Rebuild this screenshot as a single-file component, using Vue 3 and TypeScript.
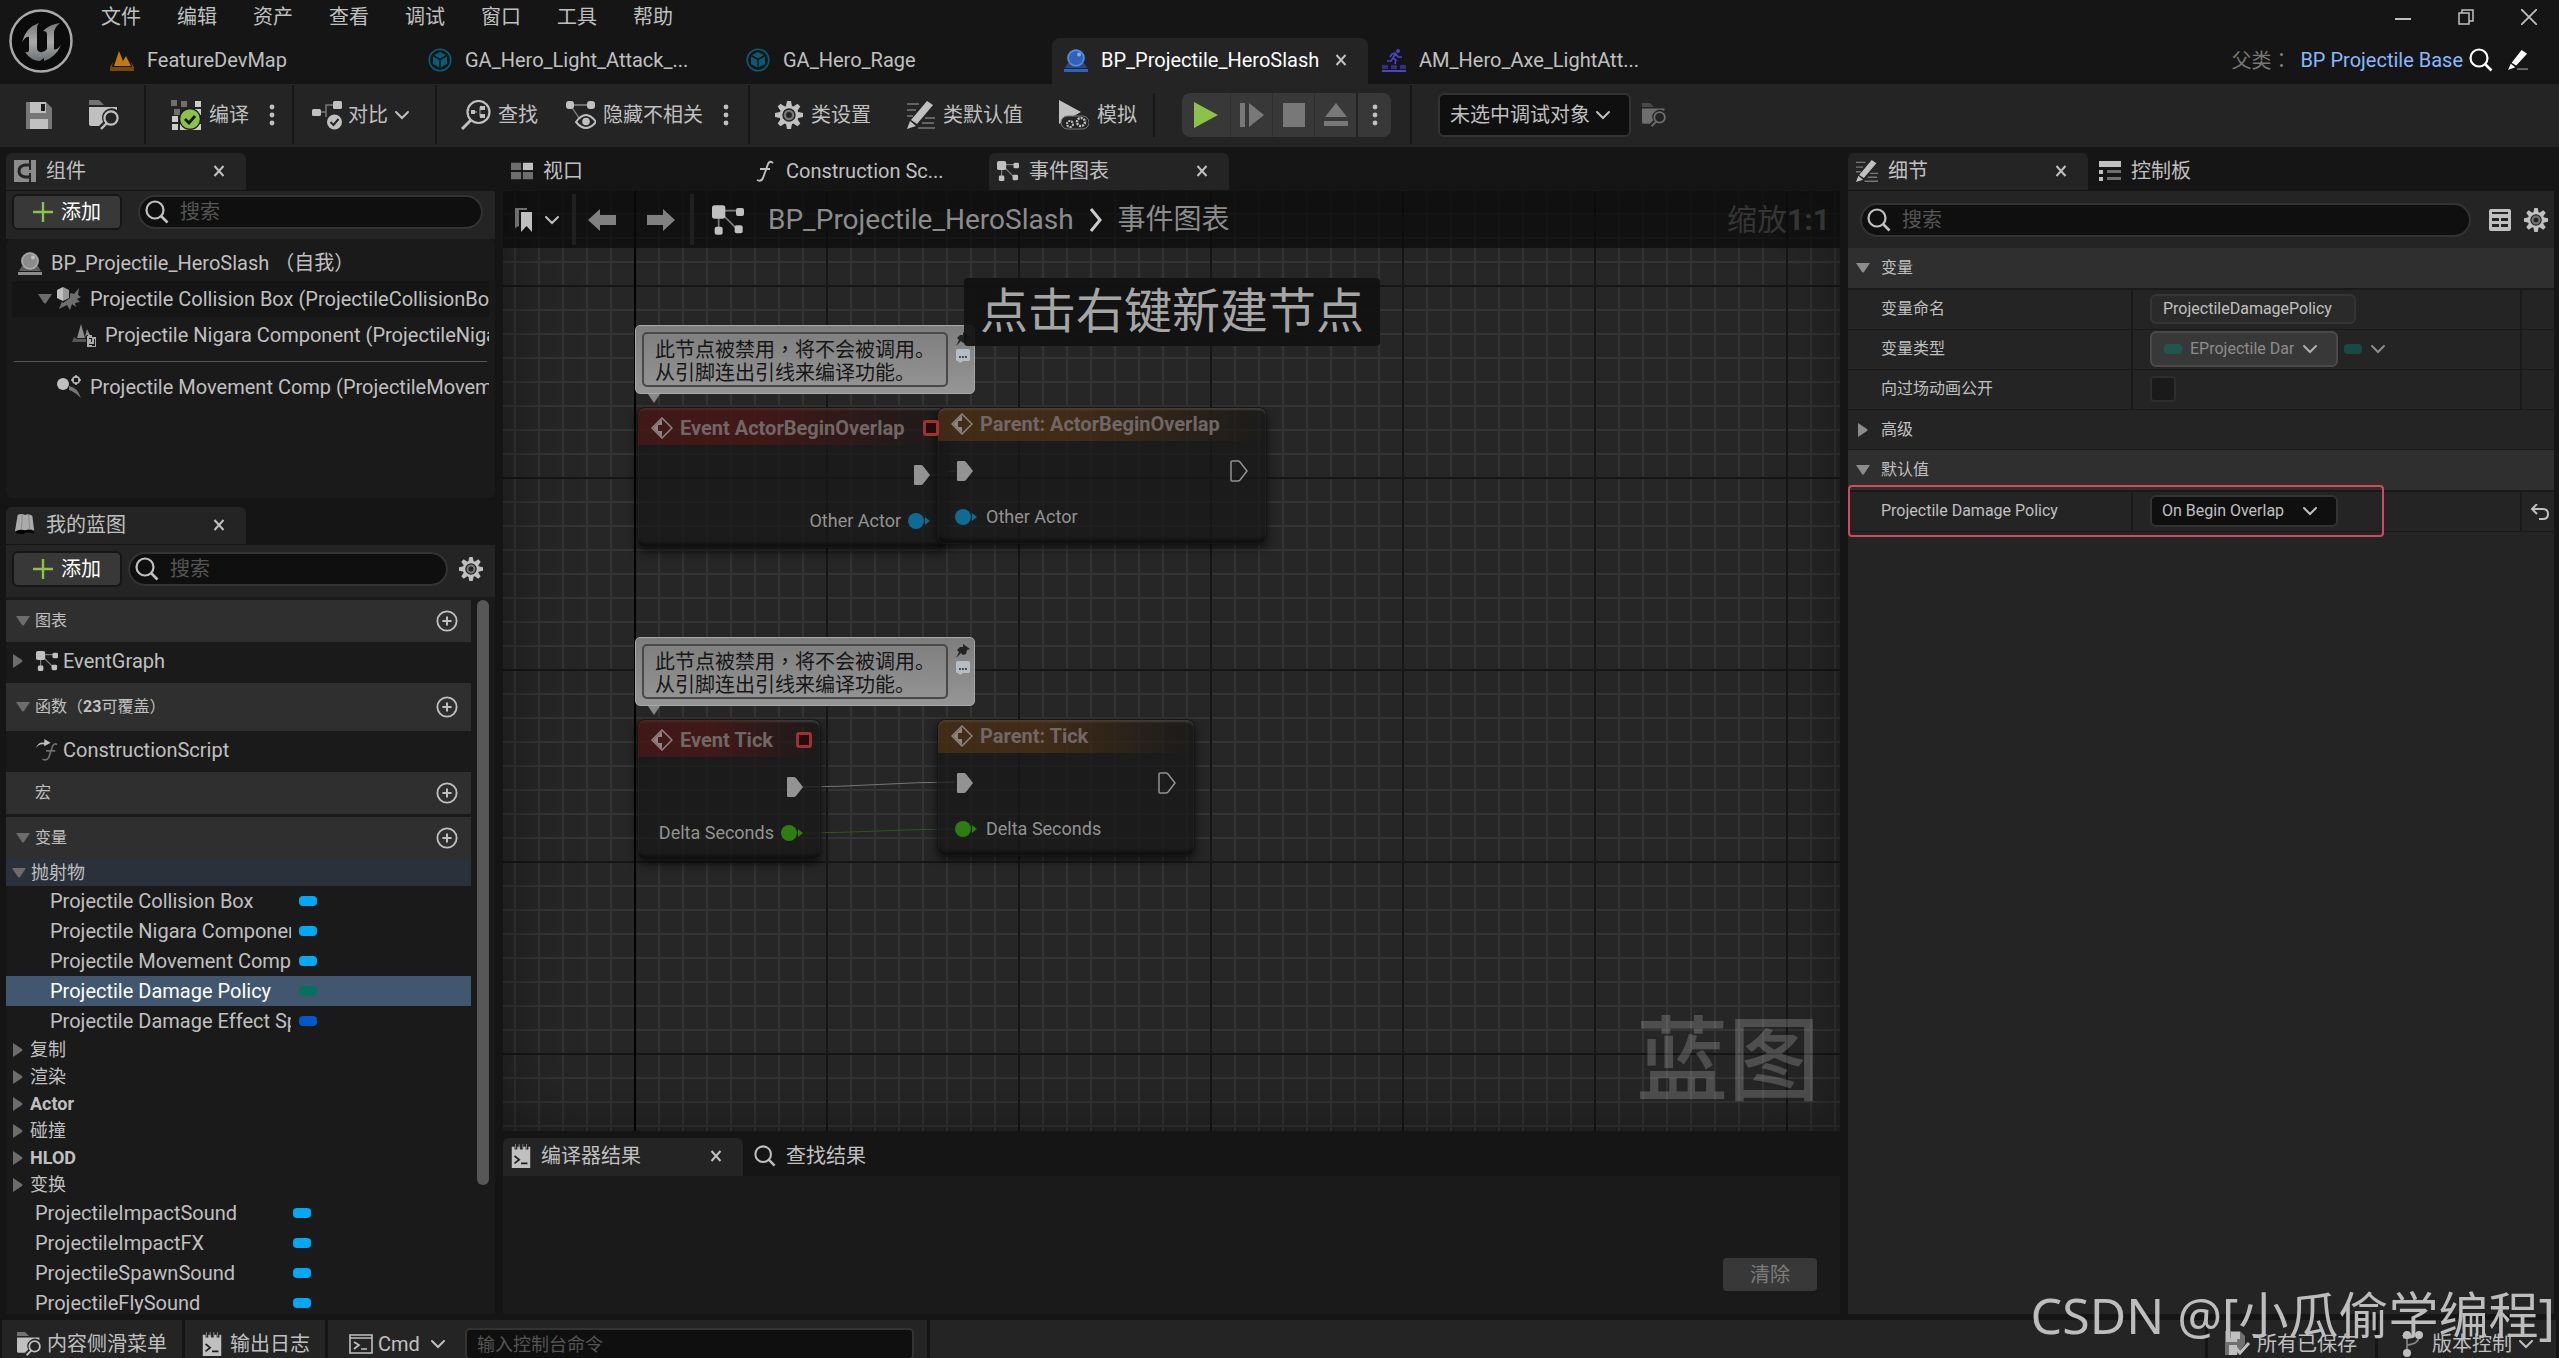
<script setup lang="ts">
import { ref } from 'vue'

interface GraphNode {
  id: string
  title: string
  kind: 'event' | 'parent'
  x: number
  y: number
  width: number
  pin: string
  color: string
}

const menus = ['文件', '编辑', '资产', '查看', '调试', '窗口', '工具', '帮助']

const documentTabs = [
  { icon: 'level', color: '#c27a0e', label: 'FeatureDevMap', active: false },
  { icon: 'ability', color: '#0b5a75', label: 'GA_Hero_Light_Attack_...', active: false },
  { icon: 'ability', color: '#0b5a75', label: 'GA_Hero_Rage', active: false },
  { icon: 'orb', color: '#2f62c0', label: 'BP_Projectile_HeroSlash', active: true },
  { icon: 'montage', color: '#4a45c8', label: 'AM_Hero_Axe_LightAtt...', active: false },
]

const variables = [
  { name: 'Projectile Collision Box', color: '#00a8f6', selected: false },
  { name: 'Projectile Nigara Component', color: '#00a8f6', selected: false },
  { name: 'Projectile Movement Comp', color: '#00a8f6', selected: false },
  { name: 'Projectile Damage Policy', color: '#04705f', selected: true },
  { name: 'Projectile Damage Effect Spec', color: '#0058cc', selected: false },
]

const categories = [
  { name: '复制', latin: false },
  { name: '渲染', latin: false },
  { name: 'Actor', latin: true },
  { name: '碰撞', latin: false },
  { name: 'HLOD', latin: true },
  { name: '变换', latin: false },
]
const looseVariables = ['ProjectileImpactSound', 'ProjectileImpactFX', 'ProjectileSpawnSound', 'ProjectileFlySound']

const nodes: GraphNode[] = [
  { id: 'overlap', title: 'Event ActorBeginOverlap', kind: 'event', x: 134, y: 216, width: 311, pin: 'Other Actor', color: '#0f6a94' },
  { id: 'overlap-parent', title: 'Parent: ActorBeginOverlap', kind: 'parent', x: 434, y: 216, width: 330, pin: 'Other Actor', color: '#0f6a94' },
  { id: 'tick', title: 'Event Tick', kind: 'event', x: 134, y: 528, width: 184, pin: 'Delta Seconds', color: '#2d7d12' },
  { id: 'tick-parent', title: 'Parent: Tick', kind: 'parent', x: 434, y: 528, width: 258, pin: 'Delta Seconds', color: '#2d7d12' },
]

const comments = [
  { id: 'c1', x: 132, y: 134 },
  { id: 'c2', x: 132, y: 446 },
]

const variableName = ref('ProjectileDamagePolicy')
const exposed = ref(false)
</script>

<template>
  <div class="editor">
    <svg class="defs" aria-hidden="true">
      <symbol id="i-close" viewBox="0 0 12 12"><path d="M1.5 1l9 10M10.500 1l-9 10" stroke="currentColor" stroke-width="2" fill="none" /></symbol>
      <symbol id="i-chevron" viewBox="0 0 16 10"><path d="M2 2l6 6 6-6" stroke="currentColor" stroke-width="2" fill="none" stroke-linecap="round" /></symbol>
      <symbol id="i-down" viewBox="0 0 16 10"><path d="M1 0h14L9 9q-1 1-2 0z" fill="currentColor" /></symbol>
      <symbol id="i-right" viewBox="0 0 10 16"><path d="M0 1v14L9 9q1-1 0-2z" fill="currentColor" /></symbol>
      <symbol id="i-dots" viewBox="0 0 6 24"><circle cx="3" cy="4" r="2.400" fill="currentColor" /><circle cx="3" cy="12" r="2.400" fill="currentColor" /><circle cx="3" cy="20" r="2.400" fill="currentColor" /></symbol>
      <symbol id="i-search" viewBox="0 0 24 24"><circle cx="10" cy="10" r="8.500" fill="none" stroke="currentColor" stroke-width="2.200" /><path d="M16 16l6.500 6.500" stroke="currentColor" stroke-width="2.600" /></symbol>
      <symbol id="i-plus" viewBox="0 0 20 20"><path d="M10 0v20M0 10h20" stroke="#8bc24a" stroke-width="2.400" /></symbol>
      <symbol id="i-add" viewBox="0 0 24 24"><circle cx="12" cy="12" r="10.500" fill="none" stroke="currentColor" stroke-width="2" /><path d="M12 7v10M7 12h10" stroke="currentColor" stroke-width="2.200" /></symbol>
      <symbol id="i-gear" viewBox="0 0 24 24">
        <g fill="currentColor"><path id="tooth" d="M10.300 0h3.400l1 5H9.300z" /><use href="#tooth" transform="rotate(45 12 12)" /><use href="#tooth" transform="rotate(90 12 12)" /><use href="#tooth" transform="rotate(135 12 12)" /><use href="#tooth" transform="rotate(180 12 12)" /><use href="#tooth" transform="rotate(225 12 12)" /><use href="#tooth" transform="rotate(270 12 12)" /><use href="#tooth" transform="rotate(315 12 12)" /></g>
        <circle cx="12" cy="12" r="7" fill="none" stroke="currentColor" stroke-width="2.500" /><circle cx="12" cy="12" r="3.500" fill="none" stroke="#777" stroke-width="2" />
      </symbol>
      <symbol id="i-save" viewBox="0 0 28 28"><path d="M1 1h20l6 6v21H1z" fill="#777" /><path d="M5 1h16v11H5z" fill="currentColor" /><path d="M5 18h18v10H5z" fill="currentColor" /><path d="M16 3h4v7h-4z" fill="#1a1a1a" /></symbol>
      <symbol id="i-folder" viewBox="0 0 30 30"><path d="M0 0h10l5 5H0z" fill="currentColor" opacity=".5" /><path d="M0 7h28v3a9.500 9.500 0 0 0-14 12l-4 4H2q-2 0-2-2z" fill="currentColor" /><circle cx="22" cy="18" r="6.600" fill="none" stroke="currentColor" stroke-width="2.200" /><path d="M18 23l-6 6" stroke="currentColor" stroke-width="2.400" /></symbol>
      <symbol id="i-graph" viewBox="0 0 24 24"><path d="M5 5h16M5 5v16M6 6l13 13" stroke="currentColor" stroke-width="1.300" opacity=".6" /><g fill="currentColor"><rect x="0" y="1" width="10" height="10" rx="2" /><rect x="18" y="3" width="6" height="6" rx="1.500" /><rect x="2" y="17" width="6" height="6" rx="1.500" /><rect x="17" y="16" width="6" height="6" rx="1.500" /></g></symbol>
      <symbol id="i-level" viewBox="0 0 24 24"><path d="M4 18L9 3l4 10 3-5 5 10z" fill="currentColor" /><path d="M3 14l-1 5h20l-1-5 3 5v4H0v-4z" fill="#754a08" /></symbol>
      <symbol id="i-ability" viewBox="0 0 24 24"><circle cx="12" cy="12" r="10.800" fill="none" stroke="currentColor" stroke-width="1.600" /><path d="M12 4l6 3-6 3.500L6 7zM5 8.500l6.300 3.500v7.500L5 16zM19 8.500L12.700 12v7.500L19 16z" fill="currentColor" /></symbol>
      <symbol id="i-orb" viewBox="0 0 24 24"><path d="M4 15l-3 5h22l-3-5z" fill="currentColor" opacity=".6" /><path d="M0 21h24v3H0z" fill="currentColor" /><circle cx="12" cy="10" r="9" fill="currentColor" /><circle cx="12" cy="10" r="7.800" fill="none" stroke="#fff" stroke-opacity=".25" stroke-width="1.500" /><circle cx="15" cy="6.500" r="2" fill="#fff" fill-opacity=".45" /></symbol>
      <symbol id="i-montage" viewBox="0 0 24 24"><circle cx="16" cy="3" r="2" fill="currentColor" /><path d="M14 5l-4 1-2 3M14 5l-3 5 3 2-1 4M11 10l-2 3H5M14 6l2 3h4" fill="none" stroke="currentColor" stroke-width="1.700" /><path d="M0 17h6v4H0zM9 17h6v4H9zM18 17h6v4h-6z" fill="#312e86" /><path d="M0 22h24v2H0z" fill="currentColor" /></symbol>
      <symbol id="i-compile" viewBox="0 0 30 30"><path d="M0 0h6v6H0zM3 9h6v6H3zM10 1h6v6h-6z" fill="#6f6f6f" /><path d="M24 1h6v6h-6zM1 16h6v6H1zM1 24h6v6H1zM9 24h21v6H9zM24 9h6v6h-6z" fill="#ccc" /><circle cx="19" cy="19" r="11" fill="#181818" /><circle cx="19" cy="19" r="9.800" fill="#8bc24a" /><path d="M14 19l4 4 6-7" fill="none" stroke="#181818" stroke-width="2.800" /></symbol>
      <symbol id="i-diff" viewBox="0 0 30 30"><path d="M8 12h6V5h8M14 12v5" fill="none" stroke="#777" stroke-width="1.500" /><rect x="0" y="9" width="9" height="7" rx="1.500" fill="currentColor" /><rect x="21" y="1" width="9" height="8" rx="1.500" fill="currentColor" /><circle cx="22.500" cy="22" r="7.500" fill="currentColor" /><path d="M18.500 22l3 3 5-6" fill="none" stroke="#242424" stroke-width="2" /></symbol>
      <symbol id="i-find" viewBox="0 0 30 30"><circle cx="17.500" cy="12" r="11" fill="none" stroke="currentColor" stroke-width="2.200" /><path d="M10 20l-9 9" stroke="currentColor" stroke-width="3" /><path d="M12 12h4M22 8h-3v8h3" fill="none" stroke="#888" stroke-width="1.300" /><rect x="10" y="10" width="4" height="4" fill="currentColor" /><rect x="19" y="6" width="5" height="4" fill="currentColor" /><rect x="19" y="14" width="5" height="4" fill="currentColor" /></symbol>
      <symbol id="i-hide" viewBox="0 0 30 30"><path d="M4 5h20M5 6l8 12" stroke="#888" stroke-width="1.300" /><rect x="0" y="1" width="8" height="8" rx="3" fill="currentColor" /><rect x="21" y="1" width="8" height="8" rx="3" fill="currentColor" /><path d="M10 22q10-14 20 0-10 12-20 0z" fill="#242424" stroke="currentColor" stroke-width="2" /><circle cx="20" cy="21.500" r="3.800" fill="currentColor" /></symbol>
      <symbol id="i-pencil" viewBox="0 0 28 28"><path d="M0 3h12M0 9h9M0 15h6M18 17h10M15 22h12M11 27h17" stroke="#777" stroke-width="1.700" /><path d="M20 0l6 4L10 23l-6-4zM3 20l6 5-9 3z" fill="currentColor" /></symbol>
      <symbol id="i-edit" viewBox="0 0 22 22"><path d="M15 0l6 4L9 17l-5-3zM3 15l5 4-8 3z" fill="currentColor" /><path d="M10 21h12" stroke="#888" stroke-width="1.500" /></symbol>
      <symbol id="i-simulate" viewBox="0 0 30 30"><path d="M0 0l22 12L0 24z" fill="currentColor" /><rect x="2" y="16" width="28" height="13" rx="6.500" fill="#242424" stroke="#777" stroke-width="1" /><circle cx="11" cy="24" r="3" fill="none" stroke="currentColor" stroke-width="2" stroke-dasharray="2 1" /><circle cx="22" cy="22" r="4" fill="none" stroke="currentColor" stroke-width="2.400" stroke-dasharray="2 1" /></symbol>
      <symbol id="i-grid4" viewBox="0 0 24 20"><path d="M0 1h11v8H0zM0 11h11v8H0zM13 11h11v8H13z" fill="#6e6e6e" /><path d="M13 1h11v8H13z" fill="currentColor" /></symbol>
      <symbol id="i-func" viewBox="0 0 18 22"><path d="M17 3q-3-3-5 1L7 18q-2 4-6 2M4 9h10" fill="none" stroke="currentColor" stroke-width="1.900" /></symbol>
      <symbol id="i-construct" viewBox="0 0 24 24"><path d="M0 10q2-7 9-6V0l7 4-7 4V6Q3 5 0 10z" fill="currentColor" /><path d="M23 6q-3-2-5 2l-4 12q-2 4-7 2M11 13h10" fill="none" stroke="#6e6e6e" stroke-width="1.800" /></symbol>
      <symbol id="i-comp" viewBox="0 0 22 22"><path d="M0 0h15v22H0zM17 0h5v22h-5z" fill="currentColor" /><path d="M17 5H11q-6 1-6 6t6 6h6" fill="none" stroke="#242424" stroke-width="3" /><path d="M12 10h6v3h-6z" fill="currentColor" /></symbol>
      <symbol id="i-book" viewBox="0 0 24 24"><path d="M4 1q4-2 8 0 4-2 8 1l2 16q-5-2-10 0-6-2-11 1z" fill="#aaa" /><path d="M2 19q5-3 10-1 5-2 10 1v2l-9-1-3 2-8-1z" fill="#000" /><path d="M9 1l-1 16M16 1l1 16" stroke="#888" stroke-width="1" /></symbol>
      <symbol id="i-log" viewBox="0 0 20 26"><path d="M0 3h3v3h3V3h3v3h3V3h3v3h3V3h2v23H0z" fill="currentColor" /><path d="M4 0v5M8 0v5M12 0v5M16 0v5" stroke="#888" stroke-width="1" /><path d="M3 13l5 4-5 4M10 21h7" fill="none" stroke="#1d1d1d" stroke-width="1.800" /></symbol>
      <symbol id="i-cmd" viewBox="0 0 24 20"><path d="M1 1h22v18H1zM1 4h22" fill="none" stroke="currentColor" stroke-width="1.600" /><path d="M5 8l5 3-5 4M12 15h6" fill="none" stroke="currentColor" stroke-width="1.700" /></symbol>
      <symbol id="i-palette" viewBox="0 0 22 20"><path d="M0 0h22v6H0zM0 9h4v4H0zM0 16h4v4H0z" fill="currentColor" /><path d="M8 9h14v3H8zM8 16h14v3H8z" fill="#6e6e6e" /></symbol>
      <symbol id="i-sheet" viewBox="0 0 22 22"><rect width="22" height="22" rx="2" fill="currentColor" /><path d="M3 3h16v2H3zM3 9h7v3H3zM12 9h7v3h-7zM3 15h7v3H3zM12 15h7v3h-7z" fill="#242424" /></symbol>
      <symbol id="i-undo" viewBox="0 0 20 16"><path d="M7 0L2 5l5 5M2 5h11q5 0 5 5t-5 5H9" fill="none" stroke="currentColor" stroke-width="2" /></symbol>
      <symbol id="i-collision" viewBox="0 0 24 24"><path d="M14 6l3 1 5-6-1 7 3 2-4 2 3 3-5 1 1 4-4-3-2 6-3-5-8 4 3-8z" fill="#6e6e6e" /><path d="M-1 3l7-4 7 4v8l-7 5-7-5z" fill="#1a1a1a" /><path d="M0 3l6-3v14l-6-3z" fill="currentColor" /><path d="M6 0l6 3v8l-6 3z" fill="#999" /></symbol>
      <symbol id="i-niagara" viewBox="0 0 24 24"><path d="M5 15L9 1l4 14z" fill="currentColor" /><path d="M13 14l2-8 3 6h-3z" fill="#888" /><path d="M2 14l-2 5h14v-3H5z" fill="#555" /><path d="M16 13h4M20 14h-4v9h4M18 16v4h3v-5h3v9h-9" fill="none" stroke="#aaa" stroke-width="2" /></symbol>
      <symbol id="i-move" viewBox="0 0 24 24"><circle cx="6" cy="9" r="6" fill="currentColor" /><circle cx="19" cy="5" r="3.300" fill="none" stroke="currentColor" stroke-width="1.500" /><path d="M19 0v3M19 7v3M14 5h3M21 5h3" stroke="currentColor" stroke-width="1.500" /><path d="M12 11q8 1 12 12-6-6-12-8z" fill="#777" /></symbol>
      <symbol id="i-bookmark" viewBox="0 0 18 24"><path d="M0 0h12v2H4v16l-4 2z" fill="#6e6e6e" /><path d="M6 4h11v20l-5.500-6L6 24z" fill="currentColor" /></symbol>
      <symbol id="i-arrow" viewBox="0 0 28 22"><path d="M0 11L12 0v6h16v10H12v6z" fill="currentColor" /></symbol>
      <symbol id="i-diamond" viewBox="0 0 22 22"><path d="M11 1l10 10-10 10L1 11z" fill="none" stroke="currentColor" stroke-width="1.500" /><path d="M11 2v6H7v6h4v6l-9-9z" fill="currentColor" /></symbol>
      <symbol id="i-exec" viewBox="0 0 18 22"><path d="M2 1h6q1 0 2 1l7 9-7 9q-1 1-2 1H2q-1 0-1-1V2q0-1 1-1z" fill="currentColor" /></symbol>
      <symbol id="i-exec-open" viewBox="0 0 18 22"><path d="M2 1h6q1 0 2 1l7 9-7 9q-1 1-2 1H2q-1 0-1-1V2q0-1 1-1z" fill="none" stroke="currentColor" stroke-width="1.500" /></symbol>
      <symbol id="i-pin" viewBox="0 0 22 18"><circle cx="8" cy="9" r="8" fill="currentColor" /><path d="M17 5l5 4-5 4z" fill="currentColor" /></symbol>
      <symbol id="i-tack" viewBox="0 0 14 14"><path d="M7 0l7 5-3 1-1 4-3 1-2-2-5 5 3-6-2-2 3-3h3z" fill="#222" /></symbol>
      <symbol id="i-bubble" viewBox="0 0 14 14"><rect width="14" height="12" rx="1.500" fill="#b4bdc4" /><path d="M2 12h5l-3 2z" fill="#b4bdc4" /><path d="M3 8h2M6 8h2M9 8h2" stroke="#43525f" stroke-width="2" /></symbol>
      <symbol id="i-saved" viewBox="0 0 26 26"><path d="M0 0h15l5 5v8l-8 11H0z" fill="#707070" /><path d="M6 1h9v7H6zM4 14h8v10H4z" fill="currentColor" /><path d="M10 16l5 6 9-10" fill="none" stroke="currentColor" stroke-width="3" /></symbol>
      <symbol id="i-branch" viewBox="0 0 22 26"><path d="M5 4v18M17 5q0 8-12 9" fill="none" stroke="#888" stroke-width="1.600" /><circle cx="5" cy="4" r="4" fill="currentColor" /><circle cx="17" cy="4" r="4" fill="currentColor" /><circle cx="5" cy="22" r="4" fill="currentColor" /></symbol>
    </svg>

    <header class="titlebar">
      <svg class="logo" viewBox="0 0 64 64" aria-label="Unreal Engine">
        <defs><linearGradient id="metal" x1="0" y1="0" x2="0" y2="1"><stop offset="0" stop-color="#777" /><stop offset=".5" stop-color="#aaa" /><stop offset="1" stop-color="#6b7072" /></linearGradient></defs>
        <circle cx="32" cy="32" r="30.500" fill="#0b0b0b" stroke="#a9a9a9" stroke-width="2.500" />
        <path d="M30 14Q17 18 13 33Q17 27 20 28V41Q20 44 16 43Q22 52 31 52L35 49V52Q47 48 52 36Q47 42 45 40V24Q45 19 51 14Q41 15 34 22Q38 22 38 25V40Q35 44 31 43Q28 42 28 39V20Q28 16 30 14z" fill="url(#metal)" />
      </svg>
      <div class="title-rows">
        <div class="menu-row">
          <nav class="menus"><button v-for="m in menus" :key="m">{{ m }}</button></nav>
          <div class="window-controls">
            <button aria-label="最小化"><svg viewBox="0 0 16 16"><path d="M0 10h16" stroke="currentColor" stroke-width="2" /></svg></button>
            <button aria-label="还原"><svg viewBox="0 0 16 16"><path d="M1 4h10v11H1zM4 4V1h11v11h-4" fill="none" stroke="currentColor" stroke-width="1.500" /></svg></button>
            <button aria-label="关闭"><svg viewBox="0 0 16 16"><path d="M0 0l16 16M16 0L0 16" stroke="currentColor" stroke-width="1.800" /></svg></button>
          </div>
        </div>
        <div class="doc-row">
          <div v-for="t in documentTabs" :key="t.label" class="doc-tab" :class="{ active: t.active }">
            <svg class="ic24" :style="{ color: t.color }"><use :href="'#i-' + t.icon" /></svg>
            <span>{{ t.label }}</span>
            <button v-if="t.active" class="tab-close" aria-label="关闭标签"><svg class="ic12"><use href="#i-close" /></svg></button>
          </div>
          <div class="parent-class">
            <span class="dim">父类<span class="mid">：</span></span><a href="#">BP Projectile Base</a>
            <button aria-label="浏览"><svg class="ic24"><use href="#i-search" /></svg></button>
            <button aria-label="编辑父类"><svg class="ic20"><use href="#i-edit" /></svg></button>
          </div>
        </div>
      </div>
    </header>

    <div class="toolbar">
      <div class="group files">
        <button aria-label="保存"><svg class="ic28"><use href="#i-save" /></svg></button>
        <button aria-label="浏览到资产"><svg class="ic30"><use href="#i-folder" /></svg></button>
      </div>
      <div class="group compile">
        <button><svg class="ic30"><use href="#i-compile" /></svg>编译</button>
        <button aria-label="编译选项"><svg class="dots"><use href="#i-dots" /></svg></button>
      </div>
      <div class="group diff">
        <button><svg class="ic30"><use href="#i-diff" /></svg>对比<svg class="chev"><use href="#i-chevron" /></svg></button>
      </div>
      <div class="group finders">
        <button><svg class="ic30"><use href="#i-find" /></svg>查找</button>
        <button><svg class="ic30"><use href="#i-hide" /></svg>隐藏不相关</button>
        <button aria-label="隐藏选项"><svg class="dots"><use href="#i-dots" /></svg></button>
      </div>
      <div class="group classes">
        <button><svg class="ic28"><use href="#i-gear" /></svg>类设置</button>
        <button><svg class="ic28"><use href="#i-pencil" /></svg>类默认值</button>
        <button><svg class="ic30"><use href="#i-simulate" /></svg>模拟</button>
        <span class="short-sep"></span>
        <div class="play">
          <button class="go" aria-label="运行"><svg viewBox="0 0 26 26"><path d="M1 0l24 13L1 26z" fill="#8bc24a" /></svg></button>
          <button aria-label="跳帧"><svg viewBox="0 0 26 26"><path d="M1 1h5v24H1zM10 1l15 12-15 12z" fill="currentColor" /></svg></button>
          <button aria-label="停止"><svg viewBox="0 0 26 26"><path d="M2 1h22v24H2z" fill="currentColor" /></svg></button>
          <button aria-label="弹出"><svg viewBox="0 0 26 26"><path d="M13 1l11 14H2zM1 19h24v5H1z" fill="currentColor" /></svg></button>
          <button class="more" aria-label="运行选项"><svg class="dots"><use href="#i-dots" /></svg></button>
        </div>
      </div>
      <div class="group debug">
        <label class="select-box big">
          <select aria-label="调试对象"><option>未选中调试对象</option></select>
          <svg class="chev"><use href="#i-chevron" /></svg>
        </label>
        <button class="off" aria-label="定位调试对象"><svg class="ic24"><use href="#i-folder" /></svg></button>
      </div>
    </div>

    <main class="workspace">
      <div class="column">
        <section class="panel components">
          <div class="tabs">
            <div class="tab active"><svg class="ic22 grey"><use href="#i-comp" /></svg><span>组件</span><button class="tab-close" aria-label="关闭组件"><svg class="ic12"><use href="#i-close" /></svg></button></div>
          </div>
          <div class="panel-head">
            <button class="add"><svg class="ic20"><use href="#i-plus" /></svg>添加</button>
            <label class="search wide"><svg class="ic24"><use href="#i-search" /></svg><input type="text" placeholder="搜索" aria-label="搜索组件" /></label>
          </div>
          <ul class="tree">
            <li class="root-row"><svg class="ic24 grey"><use href="#i-orb" /></svg><span>BP_Projectile_HeroSlash （自我）</span></li>
            <li class="child stripe"><svg class="down"><use href="#i-down" /></svg><svg class="ic24"><use href="#i-collision" /></svg><span>Projectile Collision Box (ProjectileCollisionBox)</span></li>
            <li class="grandchild"><svg class="ic24 grey"><use href="#i-niagara" /></svg><span>Projectile Nigara Component (ProjectileNigaraComponent)</span></li>
            <li class="rule"></li>
            <li class="loose"><svg class="ic24"><use href="#i-move" /></svg><span>Projectile Movement Comp (ProjectileMovementComp)</span></li>
          </ul>
        </section>

        <section class="panel blueprint">
          <div class="tabs">
            <div class="tab active"><svg class="ic22"><use href="#i-book" /></svg><span>我的蓝图</span><button class="tab-close" aria-label="关闭我的蓝图"><svg class="ic12"><use href="#i-close" /></svg></button></div>
          </div>
          <div class="panel-head second">
            <button class="add"><svg class="ic20"><use href="#i-plus" /></svg>添加</button>
            <label class="search"><svg class="ic24"><use href="#i-search" /></svg><input type="text" placeholder="搜索" aria-label="搜索蓝图" /></label>
            <button class="cog" aria-label="设置"><svg class="ic24"><use href="#i-gear" /></svg></button>
          </div>
          <div class="outline">
            <div class="outline-list">
              <h3><svg class="down"><use href="#i-down" /></svg><span>图表</span><button aria-label="添加图表"><svg class="ic22"><use href="#i-add" /></svg></button></h3>
              <div class="entry"><svg class="right"><use href="#i-right" /></svg><svg class="ic22"><use href="#i-graph" /></svg><span>EventGraph</span></div>
              <h3 class="tall"><svg class="down"><use href="#i-down" /></svg><span>函数（<b>23</b>可覆盖）</span><button aria-label="添加函数"><svg class="ic22"><use href="#i-add" /></svg></button></h3>
              <div class="entry"><i class="right"></i><svg class="ic22"><use href="#i-construct" /></svg><span>ConstructionScript</span></div>
              <h3 class="spaced"><i class="down"></i><span>宏</span><button aria-label="添加宏"><svg class="ic22"><use href="#i-add" /></svg></button></h3>
              <h3><svg class="down"><use href="#i-down" /></svg><span>变量</span><button aria-label="添加变量"><svg class="ic22"><use href="#i-add" /></svg></button></h3>
              <div class="category open"><svg class="down"><use href="#i-down" /></svg><span>抛射物</span></div>
              <div v-for="v in variables" :key="v.name" class="variable" :class="{ selected: v.selected }">
                <span class="name">{{ v.name }}</span><i class="pill" :style="{ background: v.color }"></i>
              </div>
              <div v-for="c in categories" :key="c.name" class="category" :class="{ latin: c.latin }"><svg class="right"><use href="#i-right" /></svg><span>{{ c.name }}</span></div>
              <div v-for="v in looseVariables" :key="v" class="variable flat">
                <span class="name">{{ v }}</span><i class="pill"></i>
              </div>
            </div>
            <div class="scroll"><i></i></div>
          </div>
        </section>
      </div>

      <div class="column">
        <section class="panel graph-panel">
          <div class="tabs">
            <div class="tab"><svg class="ic22"><use href="#i-grid4" /></svg><span>视口</span></div>
            <div class="tab"><svg class="ic22"><use href="#i-func" /></svg><span>Construction Sc...</span></div>
            <div class="tab active"><svg class="ic22"><use href="#i-graph" /></svg><span>事件图表</span><button class="tab-close" aria-label="关闭事件图表"><svg class="ic12"><use href="#i-close" /></svg></button></div>
          </div>
          <div class="canvas">
            <div class="breadcrumb">
              <button class="marks" aria-label="书签"><svg class="bookmark"><use href="#i-bookmark" /></svg><svg class="chev"><use href="#i-chevron" /></svg></button>
              <div class="history">
                <button aria-label="后退"><svg class="arrow"><use href="#i-arrow" /></svg></button>
                <button aria-label="前进"><svg class="arrow flip"><use href="#i-arrow" /></svg></button>
              </div>
              <svg class="ic32"><use href="#i-graph" /></svg>
              <span>BP_Projectile_HeroSlash</span>
              <svg class="crumb" viewBox="0 0 14 24"><path d="M2 1l9 11-9 11" fill="none" stroke="#ccc" stroke-width="3" /></svg>
              <span>事件图表</span>
              <span class="zoom">缩放<b>1:1</b></span>
            </div>

            <svg class="wires" viewBox="0 0 800 700" aria-hidden="true">
              <path d="M300 596C350 596 400 591 452 591" stroke="#777" />
              <path d="M298 642C350 642 400 638 452 638" stroke="#285a18" />
              <path d="M428 284C438 284 442 280 452 280" stroke="#555" />
              <path d="M427 330C437 330 442 326 452 326" stroke="#14425a" />
            </svg>

            <article v-for="n in nodes" :key="n.id" class="node" :class="n.kind" :style="{ left: n.x + 'px', top: n.y + 'px', width: n.width + 'px' }">
              <header><svg class="ic22"><use href="#i-diamond" /></svg><span>{{ n.title }}</span><i v-if="n.kind === 'event'" class="delegate"></i></header>
              <div class="pins" v-if="n.kind === 'event'"><i></i><svg class="exec"><use href="#i-exec" /></svg></div>
              <div class="pins" v-else><svg class="exec"><use href="#i-exec" /></svg><svg class="exec"><use href="#i-exec-open" /></svg></div>
              <div class="data"><span>{{ n.pin }}</span><svg class="pin" :style="{ color: n.color }"><use href="#i-pin" /></svg></div>
            </article>

            <div v-for="c in comments" :key="c.id" class="comment" :style="{ left: c.x + 'px', top: c.y + 'px' }">
              <p>此节点被禁用<span class="mid">，</span>将不会被调用。<br />从引脚连出引线来编译功能。</p>
              <div class="comment-tools"><svg><use href="#i-tack" /></svg><svg><use href="#i-bubble" /></svg></div>
            </div>

            <div class="hint">点击右键新建节点</div>
            <div class="stamp">蓝图</div>
          </div>
        </section>

        <section class="panel results">
          <div class="tabs">
            <div class="tab active"><svg class="log"><use href="#i-log" /></svg><span>编译器结果</span><button class="tab-close" aria-label="关闭编译器结果"><svg class="ic12"><use href="#i-close" /></svg></button></div>
            <div class="tab"><svg class="ic22"><use href="#i-search" /></svg><span>查找结果</span></div>
          </div>
          <div class="result-body"><button class="clear">清除</button></div>
        </section>
      </div>

      <div class="column">
        <section class="panel details">
          <div class="tabs">
            <div class="tab active"><svg class="ic22"><use href="#i-pencil" /></svg><span>细节</span><button class="tab-close" aria-label="关闭细节"><svg class="ic12"><use href="#i-close" /></svg></button></div>
            <div class="tab"><svg class="ic22"><use href="#i-palette" /></svg><span>控制板</span></div>
          </div>
          <div class="details-body">
            <div class="details-search">
              <label class="search"><svg class="ic24"><use href="#i-search" /></svg><input type="text" placeholder="搜索" aria-label="搜索细节" /></label>
              <button aria-label="属性矩阵"><svg class="ic22"><use href="#i-sheet" /></svg></button>
              <button aria-label="设置"><svg class="ic24"><use href="#i-gear" /></svg></button>
            </div>
            <div class="prop-head"><svg class="down"><use href="#i-down" /></svg><span>变量</span></div>
            <div class="prop">
              <label class="key" for="var-name">变量命名</label>
              <div class="value"><input id="var-name" v-model="variableName" class="name-input" type="text" /></div><div class="reset"></div>
            </div>
            <div class="prop">
              <span class="key">变量类型</span>
              <div class="value">
                <button class="type"><i class="pill"></i><span>EProjectile Damage</span><svg class="chev"><use href="#i-chevron" /></svg></button>
                <button class="container" aria-label="容器类型"><i class="pill"></i><svg class="chev"><use href="#i-chevron" /></svg></button>
              </div><div class="reset"></div>
            </div>
            <div class="prop">
              <label class="key" for="expose">向过场动画公开</label>
              <div class="value"><input id="expose" v-model="exposed" type="checkbox" /></div><div class="reset"></div>
            </div>
            <div class="prop advanced"><svg class="right"><use href="#i-right" /></svg><span>高级</span></div>
            <div class="prop-head"><svg class="down"><use href="#i-down" /></svg><span>默认值</span></div>
            <div class="prop">
              <label class="key" for="policy">Projectile Damage Policy</label>
              <div class="value">
                <div class="select-box small"><select id="policy"><option>On Begin Overlap</option></select><svg class="chev"><use href="#i-chevron" /></svg></div>
              </div>
              <div class="reset"><button aria-label="重置为默认值"><svg><use href="#i-undo" /></svg></button></div>
              <div class="highlight"></div>
            </div>
          </div>
        </section>
      </div>
    </main>

    <footer class="status">
      <button class="cell drawer"><svg class="ic24"><use href="#i-folder" /></svg>内容侧滑菜单</button>
      <button class="cell output"><svg class="log"><use href="#i-log" /></svg>输出日志</button>
      <div class="cell console">
        <button><svg class="ic24"><use href="#i-cmd" /></svg>Cmd<svg class="chev"><use href="#i-chevron" /></svg></button>
        <input type="text" placeholder="输入控制台命令" aria-label="控制台命令" />
      </div>
      <div class="cell filler"></div>
      <button class="cell saved"><svg class="ic26"><use href="#i-saved" /></svg>所有已保存</button>
      <button class="cell source"><svg class="ic26"><use href="#i-branch" /></svg>版本控制<svg class="chev"><use href="#i-chevron" /></svg></button>
    </footer>
    <div class="credit">CSDN @[小瓜偷学编程]</div>
  </div>
</template>

<style>
body {
  background: #151515;
  overflow: hidden;
}
</style>

<style scoped>
.editor {
  position: relative;
  display: flex;
  flex-direction: column;
  height: 100vh;
  overflow: hidden;
  background: #151515;
  color: #c0c0c0;
  font: 20px/24px Roboto, "Noto Sans CJK SC", sans-serif;
  white-space: nowrap;
}
.editor *,
.editor *::before {
  box-sizing: border-box;
}
.defs {
  position: absolute;
  width: 0;
  height: 0;
}
button,
input,
select {
  margin: 0;
  padding: 0;
  border: 0;
  background: none;
  color: inherit;
  font: inherit;
}
button {
  display: flex;
  align-items: center;
  gap: 8px;
}
svg {
  flex: none;
  display: block;
}
i {
  flex: none;
}
.mid { font-family: "Noto Sans CJK TC", sans-serif; }
.ic12 { width: 12px; height: 12px; }
.ic20 { width: 20px; height: 20px; }
.ic22 { width: 22px; height: 22px; }
.ic24 { width: 24px; height: 24px; }
.ic26 { width: 26px; height: 26px; }
.ic28 { width: 28px; height: 28px; }
.ic30 { width: 30px; height: 30px; }
.ic32 { width: 32px; height: 32px; }
.grey { color: #8c8c8c; }
.dots { width: 6px; height: 24px; }
.chev { width: 16px; height: 10px; }
.down { width: 16px; height: 10px; color: #6c6c6c; }
.right { width: 10px; height: 16px; color: #6c6c6c; }
.log { width: 20px; height: 24px; }
.pill {
  width: 18px;
  height: 10px;
  border-radius: 4px;
  background: #00a8f6;
}

.titlebar {
  display: flex;
  flex: none;
  height: 84px;
  padding-left: 9px;
}
.logo {
  width: 64px;
  height: 64px;
  margin-top: 9px;
}
.title-rows {
  flex: 1;
  display: flex;
  flex-direction: column;
  padding-left: 25px;
}
.menu-row {
  display: flex;
  justify-content: space-between;
  height: 38px;
}
.menus {
  display: flex;
  gap: 36px;
  height: 34px;
  padding-left: 3px;
}
.window-controls {
  display: flex;
  gap: 47px;
  height: 34px;
  padding-right: 22px;
}
.window-controls svg {
  width: 16px;
  height: 16px;
}
.doc-row {
  display: flex;
  gap: 2px;
  height: 46px;
}
.doc-tab {
  display: flex;
  align-items: center;
  gap: 13px;
  flex: 0 1 316px;
  padding: 0 0 2px 12px;
  border-radius: 8px 8px 0 0;
}
.doc-tab.active {
  background: #242424;
  color: #fff;
}
.tab-close {
  margin-left: auto;
  margin-right: 21px;
  color: #c0c0c0;
}
.parent-class {
  display: flex;
  align-items: center;
  margin-left: auto;
  padding: 0 31px 2px 0;
  color: #fff;
}
.parent-class .dim { color: #777; }
.parent-class a {
  margin: 0 6px 0 9px;
  color: #8ab8ff;
  text-decoration: none;
}
.parent-class button + button { margin-left: 15px; }

.toolbar {
  display: flex;
  flex: none;
  height: 63px;
  padding-bottom: 3px;
  padding-top: 1px;
  background: #242424;
}
.group {
  display: flex;
  align-items: center;
}
.group + .group { border-left: 2px solid #161616; }
.files { width: 144px; padding-left: 25px; gap: 36px; }
.compile { width: 148px; padding-left: 25px; gap: 20px; }
.diff { width: 143px; padding-left: 18px; }
.diff button { gap: 6px; }
.finders { width: 313px; padding-left: 24px; gap: 28px; }
.finders button { gap: 7px; }
.finders .dots { margin-left: -8px; }
.classes { padding-left: 25px; gap: 36px; }
.classes button + .short-sep { margin-left: -20px; }
.short-sep { width: 2px; height: 44px; margin-right: -9px; background: #161616; }
.play {
  display: flex;
  height: 44px;
  margin-right: 19px;
  border-radius: 8px;
  background: #383838;
  color: #787878;
}
.play button {
  justify-content: center;
  width: 42px;
}
.play button + button { border-left: 1px solid #2e2e2e; }
.play .go { width: 48px; }
.play .more { width: 35px; color: #c0c0c0; border-left: 2px solid #222; }
.play svg:not(.dots) { width: 26px; height: 26px; }
.debug { padding-left: 26px; gap: 11px; }
.off { color: #6e6e6e; }

.select-box {
  display: flex;
  align-items: center;
  border: 2px solid #333;
  border-radius: 6px;
  background: #0f0f0f;
}
.select-box select {
  appearance: none;
  width: 100%;
  height: 100%;
  padding-right: 34px;
  outline: 0;
}
.select-box .chev { margin-left: -34px; pointer-events: none; }
.big { width: 193px; height: 44px; }
.big select { padding-left: 10px; }
.small { width: 188px; height: 32px; }
.small select { padding-left: 10px; }

.workspace {
  display: grid;
  grid-template-columns: minmax(0, 489fr) minmax(0, 1337fr) minmax(0, 706fr);
  gap: 8px;
  flex: 1;
  min-height: 0;
  padding: 6px 5px 6px 6px;
}
.column {
  display: flex;
  flex-direction: column;
  min-height: 0;
}
.panel {
  display: flex;
  flex-direction: column;
  min-height: 0;
}
.tabs {
  display: flex;
  flex: none;
  gap: 3px;
  height: 37px;
  margin-bottom: 1px;
}
.tab {
  display: flex;
  align-items: center;
  gap: 10px;
  width: 240px;
  padding: 0 0 2px 8px;
  border-radius: 6px 6px 0 0;
}
.tab.active { background: #242424; }

.components { flex: 345 1 0; margin-bottom: 9px; }
.blueprint { flex: 807 1 0; }
.panel-head {
  display: flex;
  align-items: center;
  flex: none;
  gap: 16px;
  height: 48px;
  padding: 0 12px 6px 6px;
  background: #242424;
}
.panel-head.second {
  gap: 6px;
  height: 52px;
  padding-bottom: 4px;
}
.add {
  justify-content: center;
  flex: none;
  width: 110px;
  height: 36px;
  border: 2px solid #161616;
  border-radius: 6px;
  background: #383838;
  color: #fff;
}
.search {
  display: flex;
  align-items: center;
  flex: 1;
  gap: 11px;
  height: 34px;
  padding-left: 5px;
  border: 2px solid #333;
  border-radius: 17px;
  background: #0f0f0f;
}
.search input {
  flex: 1;
  min-width: 0;
  height: 28px;
  outline: 0;
}
input::placeholder {
  color: #555;
  opacity: 1;
}
.second .cog { margin-left: 5px; }

.tree {
  flex: 1;
  margin: 0;
  padding: 6px 6px 0;
  border-radius: 6px;
  background: #1a1a1a;
  list-style: none;
}
.tree li {
  display: flex;
  align-items: center;
  gap: 9px;
  height: 36px;
  overflow: hidden;
}
.tree .root-row { padding-left: 6px; }
.tree .child { padding-left: 25px; }
.child .down { margin-right: -5px; }
.tree .stripe { background: #151515; }
.tree .grandchild { padding-left: 60px; }
.tree .loose { padding-left: 45px; }
.tree .rule {
  height: 1px;
  margin: 8px 2px 7px;
  background: #555;
}

.outline {
  display: flex;
  flex: 1;
  min-height: 0;
  padding-top: 3px;
  overflow: hidden;
  background: #1a1a1a;
}
.outline-list {
  flex: 1;
  min-width: 0;
}
h3 {
  display: flex;
  align-items: center;
  gap: 4px;
  height: 42px;
  margin: 0;
  padding: 0 13px 0 9px;
  background: #2f2f2f;
  font-size: 16px;
  font-weight: 400;
}
h3 button { margin-left: auto; }
h3.tall { height: 48px; }
h3.spaced { margin-bottom: 3px; }
.entry {
  display: flex;
  align-items: center;
  gap: 5px;
  height: 41px;
  padding: 0 0 3px 7px;
}
.entry .right { margin-right: 8px; }
.category {
  display: flex;
  align-items: center;
  gap: 7px;
  height: 27px;
  padding-left: 7px;
  font-size: 18px;
}
.category.latin { font-weight: 700; }
.category.open {
  gap: 4px;
  padding-left: 5px;
  background: #2a313a;
}
.variable {
  display: flex;
  align-items: center;
  gap: 8px;
  height: 30px;
  padding-left: 44px;
}
.variable .name {
  width: 241px;
  overflow: hidden;
}
.variable.flat { padding-left: 29px; }
.variable.flat .name { width: 250px; }
.variable.selected {
  background: #40576f;
  color: #fff;
}
.scroll {
  width: 24px;
  padding-left: 6px;
}
.scroll i {
  display: block;
  width: 12px;
  height: 82%;
  border-radius: 6px;
  background: #575757;
}

.graph-panel { flex: 978 1 0; margin-bottom: 7px; }
.results { flex: 176 1 0; }
.canvas {
  position: relative;
  flex: 1;
  overflow: hidden;
  background:
    linear-gradient(#000, #000) 131px 0 / 2px 100% no-repeat,
    linear-gradient(90deg, #161616 2px, transparent 2px) 131px 0 / 192px 192px,
    linear-gradient(#161616 2px, transparent 2px) 0 94px / 192px 192px,
    linear-gradient(90deg, #343434 2px, transparent 2px) 11px 0 / 24px 24px,
    linear-gradient(#343434 2px, transparent 2px) 0 22px / 24px 24px,
    #262626;
}
.canvas::before {
  content: "";
  position: absolute;
  inset: 0;
  box-shadow: inset 0 0 70px rgba(0, 0, 0, .4);
}
.breadcrumb {
  position: relative;
  display: flex;
  align-items: center;
  height: 57px;
  padding: 0 10px 0 12px;
  background: rgba(10, 10, 10, .7);
  color: #8c8c8c;
  font-size: 28px;
  line-height: 36px;
}
.marks { gap: 11px; width: 57px; color: #c0c0c0; }
.bookmark { width: 18px; height: 24px; }
.history {
  display: flex;
  gap: 31px;
  height: 51px;
  margin-right: 18px;
  padding: 0 15px 0 12px;
  border: solid #202020;
  border-width: 0 4px;
  color: #808080;
}
.arrow { width: 28px; height: 22px; }
.flip { transform: scaleX(-1); }
.breadcrumb .ic32 { margin-right: 24px; color: #c0c0c0; }
.crumb { width: 14px; height: 24px; margin: 0 15px; }
.zoom {
  margin-left: auto;
  color: #353535;
  font-size: 30px;
}
.wires {
  position: absolute;
  left: 0;
  top: 0;
  width: 800px;
  height: 700px;
  fill: none;
}
.node {
  position: absolute;
  padding-bottom: 3px;
  border: 1px solid #161616;
  border-radius: 8px;
  background: rgba(22, 24, 22, .72);
  box-shadow: 0 4px 8px rgba(0, 0, 0, .6), inset 0 2px 2px rgba(255, 255, 255, .15), inset 0 -4px 3px rgba(0, 0, 0, .4);
  color: #939393;
}
.node header {
  display: flex;
  align-items: center;
  gap: 7px;
  height: 37px;
  padding: 2px 8px 0 13px;
  border-radius: 7px 7px 0 0;
  background: linear-gradient(90deg, rgba(90, 22, 22, .6) 40%, transparent);
  color: #716766;
  font-weight: 700;
}
.node header .ic22 { color: #8d8482; }
.node.parent header {
  height: 33px;
  padding: 0 8px 2px 13px;
  background: linear-gradient(90deg, rgba(104, 60, 20, .5) 40%, transparent);
}
.delegate {
  position: relative;
  z-index: 2;
  width: 16px;
  height: 16px;
  margin-left: auto;
  border: 3px solid #a33030;
  border-radius: 3px;
  background: #220d0d;
}
.pins,
.data {
  display: flex;
  align-items: center;
  justify-content: space-between;
  height: 46px;
  padding: 0 17px;
}
.pins { margin-top: 7px; padding: 0 18px; }
.event .pins { padding-right: 16px; }
.exec { width: 18px; height: 22px; }
.data {
  justify-content: flex-end;
  gap: 7px;
  font-size: 18px;
}
.parent .data {
  flex-direction: row-reverse;
  gap: 9px;
}
.pin { width: 22px; height: 18px; }
.comment {
  position: absolute;
  display: flex;
  gap: 8px;
  width: 340px;
  height: 69px;
  padding: 6px;
  border: 1px solid #a8a8a8;
  border-radius: 5px;
  background: linear-gradient(rgba(130, 130, 130, .95), rgba(155, 155, 155, .95));
  color: #161616;
  line-height: 23px;
}
.comment::before {
  content: "";
  position: absolute;
  left: 12px;
  top: 68px;
  border: solid transparent;
  border-width: 9px 6px 0;
  border-top-color: #888;
}
.comment p {
  width: 306px;
  margin: 0;
  padding: 3px 11px;
  border: 2px solid #484848;
  border-radius: 5px;
}
.comment-tools svg {
  width: 14px;
  height: 14px;
  margin-bottom: 3px;
}
.hint {
  position: absolute;
  left: 461px;
  top: 87px;
  height: 68px;
  padding: 0 16px;
  border-radius: 4px;
  background: rgba(17, 17, 17, .93);
  color: #a5a5a5;
  font-size: 48px;
  line-height: 68px;
}
.stamp {
  position: absolute;
  right: 20px;
  bottom: 17px;
  color: rgba(255, 255, 255, .19);
  font-size: 92px;
  font-weight: 500;
  line-height: 104px;
}
.results .tabs { margin-bottom: 0; height: 38px; }
.result-body {
  display: flex;
  flex: 1;
  align-items: flex-end;
  justify-content: flex-end;
  padding: 0 23px 23px;
  background: #1a1a1a;
}
.clear {
  justify-content: center;
  width: 94px;
  height: 33px;
  border-radius: 4px;
  background: #383838;
  color: #7c7c7c;
}

.details { flex: 1; }
.details-body {
  flex: 1;
  background: #242424;
  font-size: 16px;
}
.details-search {
  display: flex;
  align-items: center;
  gap: 13px;
  height: 57px;
  padding: 0 6px 0 12px;
  font-size: 20px;
}
.details-search .search { margin-right: 5px; }
.prop-head {
  display: flex;
  align-items: center;
  gap: 10px;
  height: 42px;
  padding: 0 7px;
  border-bottom: 2px solid #1a1a1a;
  background: #2f2f2f;
}
.details .down,
.details .right { color: #8c8c8c; }
.prop {
  position: relative;
  display: flex;
  height: 40px;
  border-bottom: 1px solid #1a1a1a;
}
.prop.advanced {
  align-items: center;
  gap: 13px;
  padding-left: 10px;
}
.key {
  flex: 0 0 285px;
  padding-left: 33px;
  line-height: 38px;
  border-right: 2px solid #1a1a1a;
}
.value {
  display: flex;
  align-items: center;
  flex: 1;
  gap: 6px;
  padding: 0 0 2px 17px;
}
.reset {
  display: flex;
  align-items: center;
  width: 34px;
  padding-left: 8px;
  border-left: 2px solid #1a1a1a;
}
.reset svg { width: 20px; height: 16px; }
.name-input {
  width: 206px;
  height: 30px;
  padding-left: 11px;
  border: 2px solid #353535;
  border-radius: 6px;
  background: #2a2a2a;
}
.type {
  width: 188px;
  height: 36px;
  padding-left: 12px;
  border: 2px solid #4a4a4a;
  border-radius: 6px;
  background: #383838;
  color: #8c8c8c;
}
.type span { width: 104px; overflow: hidden; text-align: left; }
.type .chev { color: #b0b0b0; }
.value .pill { background: #1f574e; }
.container { color: #8c8c8c; }
.container .pill { background: #174a42; }
.value input[type="checkbox"] {
  appearance: none;
  width: 26px;
  height: 26px;
  border: 2px solid #2d2d2d;
  border-radius: 4px;
  background: #1a1a1a;
}
.highlight {
  position: absolute;
  left: 0;
  top: -7px;
  width: 536px;
  height: 52px;
  border: 2px solid #d04a5c;
  border-radius: 4px;
  pointer-events: none;
}

.status {
  display: flex;
  flex: none;
  gap: 3px;
  height: 38px;
  padding: 0 3px 0 2px;
  overflow: hidden;
}
.cell {
  display: flex;
  align-items: center;
  gap: 6px;
  height: 48px;
  background: #242424;
}
.drawer { width: 180px; padding-left: 15px; }
.output { width: 140px; padding-left: 17px; gap: 8px; }
.console { width: 599px; padding-left: 21px; }
.console button { gap: 5px; width: 110px; }
.console .chev { margin-left: 5px; }
.console input {
  flex: 1;
  height: 32px;
  margin-right: 13px;
  padding-left: 10px;
  border: 2px solid #333;
  border-radius: 5px;
  background: #0f0f0f;
  font-size: 18px;
}
.filler { flex: 1; }
.saved { width: 167px; padding-left: 17px; }
.source { width: 178px; padding-left: 22px; }
.credit {
  position: absolute;
  right: 4px;
  bottom: 8px;
  color: #bdbdbd;
  font: 50px/70px "Noto Sans", "Noto Sans CJK SC", sans-serif;
  pointer-events: none;
}
</style>
